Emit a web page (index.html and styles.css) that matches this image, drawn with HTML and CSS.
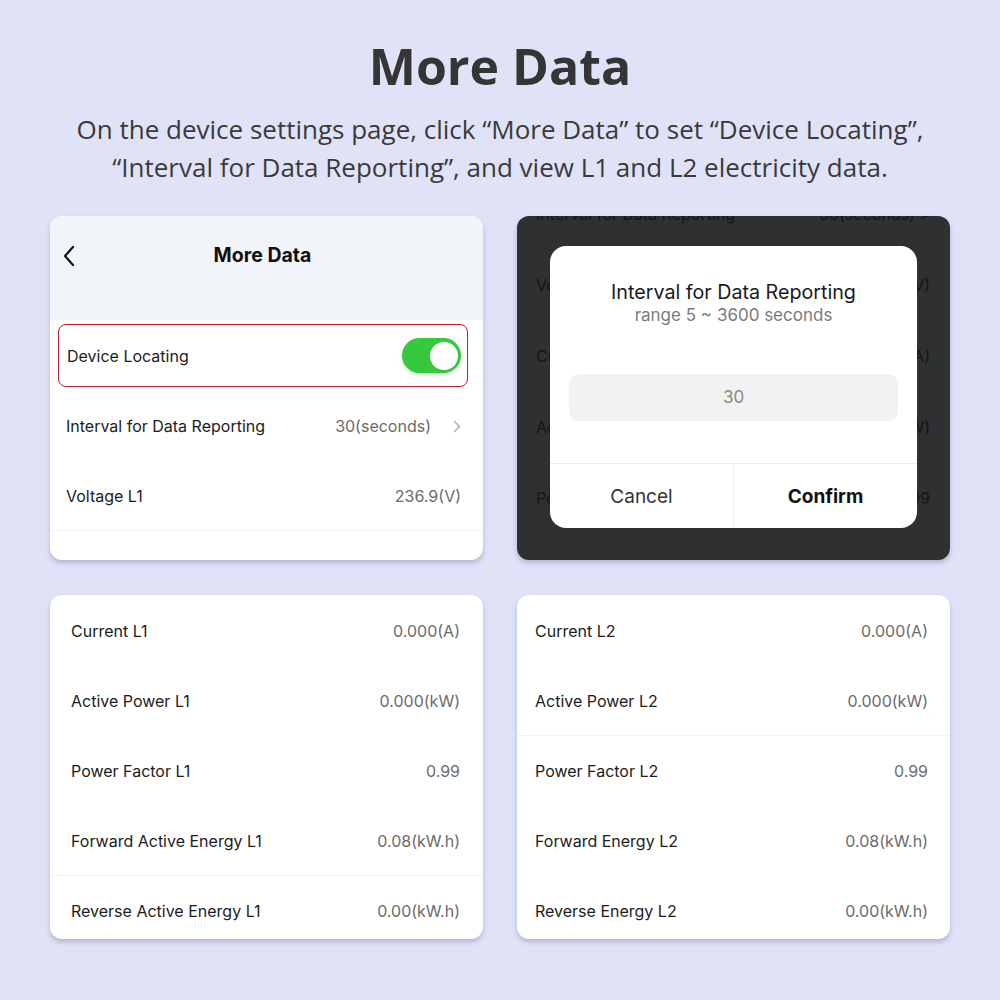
FILE: index.html
```html
<!DOCTYPE html>
<html lang="en">
<head>
  <meta charset="UTF-8">
  <title>More Data</title>
  <link rel="stylesheet" href="styles.css">
</head>
<body>
  <h1 class="title">More Data</h1>
  <p class="lead">On the device settings page, click “More Data” to set “Device Locating”,<br>“Interval for Data Reporting”, and view L1 and L2 electricity data.</p>

  <div class="grid">
    <!-- screen 1 -->
    <div class="card">
      <div class="nav">
        <svg class="back" width="14" height="22" viewBox="0 0 14 22"><path d="M11 2 L3 11 L11 20" fill="none" stroke="#111" stroke-width="2.2" stroke-linecap="round" stroke-linejoin="round"/></svg>
        <span class="nav-title">More Data</span>
      </div>
      <div class="locate">
        <span class="label">Device Locating</span>
        <span class="switch"><span class="knob"></span></span>
      </div>
      <div class="row">
        <span class="label">Interval for Data Reporting</span>
        <span class="value">30(seconds)<svg class="chev" width="8" height="13" viewBox="0 0 8 13"><path d="M1.5 1.5 L6.5 6.5 L1.5 11.5" fill="none" stroke="#aaa" stroke-width="1.4" stroke-linecap="round" stroke-linejoin="round"/></svg></span>
      </div>
      <div class="row line">
        <span class="label">Voltage L1</span>
        <span class="value">236.9(V)</span>
      </div>
    </div>

    <!-- screen 2 -->
    <div class="card dark">
      <div class="behind">
        <div class="row"><span class="label">Interval for Data Reporting</span><span class="value">30(seconds) &gt;</span></div>
        <div class="row"><span class="label">Voltage L1</span><span class="value">236.9(V)</span></div>
        <div class="row"><span class="label">Current L1</span><span class="value">0.000(A)</span></div>
        <div class="row"><span class="label">Active Power L1</span><span class="value">0.000(kW)</span></div>
        <div class="row"><span class="label">Power Factor L1</span><span class="value">0.99</span></div>
      </div>
      <div class="dialog">
        <div class="dlg-title">Interval for Data Reporting</div>
        <div class="dlg-sub">range 5 ~ 3600 seconds</div>
        <div class="dlg-input">30</div>
        <div class="dlg-btns">
          <span class="btn">Cancel</span>
          <span class="btn ok">Confirm</span>
        </div>
      </div>
    </div>

    <!-- screen 3 -->
    <div class="card list">
      <div class="row"><span class="label">Current L1</span><span class="value">0.000(A)</span></div>
      <div class="row"><span class="label">Active Power L1</span><span class="value">0.000(kW)</span></div>
      <div class="row"><span class="label">Power Factor L1</span><span class="value">0.99</span></div>
      <div class="row line"><span class="label">Forward Active Energy L1</span><span class="value">0.08(kW.h)</span></div>
      <div class="row"><span class="label">Reverse Active Energy L1</span><span class="value">0.00(kW.h)</span></div>
    </div>

    <!-- screen 4 -->
    <div class="card list right">
      <div class="row"><span class="label">Current L2</span><span class="value">0.000(A)</span></div>
      <div class="row line"><span class="label">Active Power L2</span><span class="value">0.000(kW)</span></div>
      <div class="row"><span class="label">Power Factor L2</span><span class="value">0.99</span></div>
      <div class="row"><span class="label">Forward Energy L2</span><span class="value">0.08(kW.h)</span></div>
      <div class="row"><span class="label">Reverse Energy L2</span><span class="value">0.00(kW.h)</span></div>
    </div>
  </div>
</body>
</html>
```
FILE: styles.css
```css
* { box-sizing: border-box; margin: 0; padding: 0; }
body { width: 1000px; height: 1000px; background: #e0e3f8; font-family: "Open Sans", sans-serif; color: #333; overflow: hidden; }

.title { text-align: center; font-size: 50px; font-weight: 700; color: #353535; padding-top: 34px; line-height: 64px; }
.lead { text-align: center; font-size: 26px; line-height: 38px; color: #3a3a3a; margin-top: 12px; }

.grid { display: grid; grid-template-columns: 433px 433px; grid-template-rows: 344px 344px; column-gap: 34px; row-gap: 35px; padding: 0 50px; margin-top: 30px; }
.card { background: #fff; border-radius: 12px; overflow: hidden; box-shadow: 0 3px 5px rgba(90,95,130,0.35); font-family: Inter, "Noto Sans", sans-serif; position: relative; }

.row { display: flex; justify-content: space-between; align-items: center; height: 70px; padding: 0 22px 0 16px; font-size: 16px; }
.row.line { border-bottom: 1px solid #f2f3f5; }
.label { color: #1c1c1c; }
.value { color: #6b6b6b; display: flex; align-items: center; }
.chev { margin-left: 22px; }

.nav { height: 104px; background: #f1f4f9; display: flex; justify-content: center; padding: 27px 8px 0 0; position: relative; }
.back { position: absolute; left: 12px; top: 29px; }
.nav-title { font-size: 19.5px; font-weight: 700; color: #111; }

.locate { display: flex; justify-content: space-between; align-items: center; height: 63px; margin: 4px 15px 4px 8px; border: 1.3px solid #b3242c; border-radius: 8px; padding: 0 6px 0 8px; font-size: 16px; }
.switch { width: 59px; height: 35px; border-radius: 18px; background: #36c93c; position: relative; box-shadow: 0 2px 4px rgba(0,0,0,0.15); }
.knob { position: absolute; right: 3px; top: 3.5px; width: 28px; height: 28px; border-radius: 50%; background: #fff; }

.dark { background: #2f3032; }
.behind { margin-top: -38px; }
.behind .row { padding: 0 20px 0 19px; height: 71px; }
.behind .label, .behind .value { color: #151515; }

.dialog { position: absolute; left: 33px; top: 30px; width: 367px; height: 282px; background: #fff; border-radius: 16px; text-align: center; overflow: hidden; }
.dlg-title { font-size: 19.7px; color: #1a1a1a; margin-top: 33px; line-height: 26px; }
.dlg-sub { font-size: 17px; color: #7a7a7a; line-height: 20px; }
.dlg-input { margin: 49px 19px 0; height: 47px; border-radius: 10px; background: #f2f2f2; color: #888; font-size: 17px; line-height: 47px; }
.dlg-btns { display: flex; margin-top: 42px; border-top: 1px solid #ececec; height: 65px; }
.btn { flex: 1; display: flex; align-items: center; justify-content: center; font-size: 19px; color: #333; }
.btn.ok { font-weight: 700; color: #111; border-left: 1px solid #ececec; }

.list { padding-top: 1px; }
.list .row { padding: 0 23px 0 21px; }
.list.right .row { padding: 0 22px 0 18px; }
```
